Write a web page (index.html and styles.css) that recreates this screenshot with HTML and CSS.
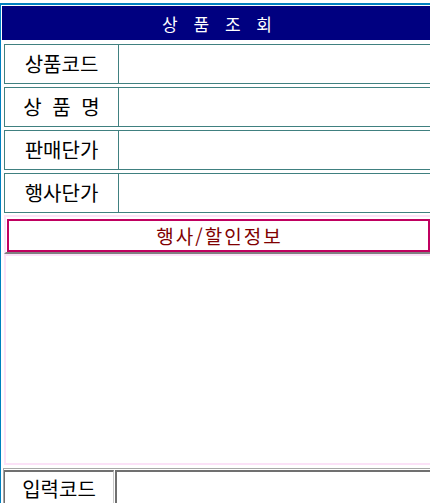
FILE: index.html
```html
<!DOCTYPE html>
<html lang="ko">
<head>
    <meta charset="UTF-8">
    <meta name="viewport" content="width=device-width, initial-scale=1.0">
    <title>상품조회</title>
    <link rel="stylesheet" href="styles.css">
</head>
<body>

    <div class="frame">
        <div class="title">상 품 조 회</div>

        <div class="fields">
            <div class="field">
                <div class="field-label">상품코드</div>
                <div class="field-value"></div>
            </div>
            <div class="field">
                <div class="field-label">상 품 명</div>
                <div class="field-value"></div>
            </div>
            <div class="field">
                <div class="field-label">판매단가</div>
                <div class="field-value"></div>
            </div>
            <div class="field">
                <div class="field-label">행사단가</div>
                <div class="field-value"></div>
            </div>
        </div>

        <div class="event-head">
            <div class="event-btn">행사/할인정보</div>
        </div>
        <div class="event-list"></div>

        <div class="input-row">
            <div class="input-label">입력코드</div>
            <div class="input-box"></div>
        </div>
    </div>

</body>
</html>
```

FILE: styles.css
```css
* {
    margin: 0;
    padding: 0;
    box-sizing: border-box;
}

html, body {
    overflow: hidden;
    background: white;
}

body {
    font-family: "Noto Sans CJK KR", "Noto Sans", sans-serif;
    color: black;
    line-height: 1;
}

.frame {
    margin-top: 3px;
    width: 440px;
    border-top: 2px solid #0080c0;
    border-left: 1px solid #0080c0;
    padding: 1px 0 0 1px;
}

.title {
    width: 430px;
    height: 34px;
    margin-bottom: 4px;
    background: #000080;
    color: white;
    font-size: 17px;
    word-spacing: 11px;
    display: flex;
    align-items: center;
    justify-content: center;
}

.fields {
    display: flex;
    flex-direction: column;
    gap: 3px;
    margin: 0 0 2px 2px;
}

.field {
    display: flex;
    height: 40px;
    border: 1px solid #408080;
}

.field-label {
    width: 114px;
    border-right: 1px solid #408080;
    font-size: 20px;
    word-spacing: 5px;
    display: flex;
    align-items: center;
    justify-content: center;
}

.field-value {
    flex: 1;
}

.event-head {
    margin-left: 2px;
    border: 2px solid #fce2f8;
    border-bottom-color: #808080;
    padding: 2px 0 0 1px;
}

.event-btn {
    width: 423px;
    height: 33px;
    border: 2px solid #c00060;
    color: #800000;
    font-size: 19px;
    letter-spacing: 2px;
    padding-left: 2px;
    display: flex;
    align-items: center;
    justify-content: center;
}

.event-list {
    margin: 0 0 3px 2px;
    height: 211px;
    border: 2px solid #fce2f8;
}

.input-row {
    display: flex;
    gap: 1px;
    height: 42px;
    margin-left: 1px;
    padding-top: 1px;
    border-top: 1px solid #a8a8a8;
    border-left: 1px solid #a8a8a8;
}

.input-label {
    width: 110px;
    border-top: 2px solid #707070;
    border-left: 1px solid #707070;
    border-right: 1px solid #c8c8c8;
    font-size: 20px;
    padding-top: 7px;
    display: flex;
    justify-content: center;
}

.input-box {
    flex: 1;
    border-top: 2px solid #707070;
    border-left: 2px solid #707070;
}
```
